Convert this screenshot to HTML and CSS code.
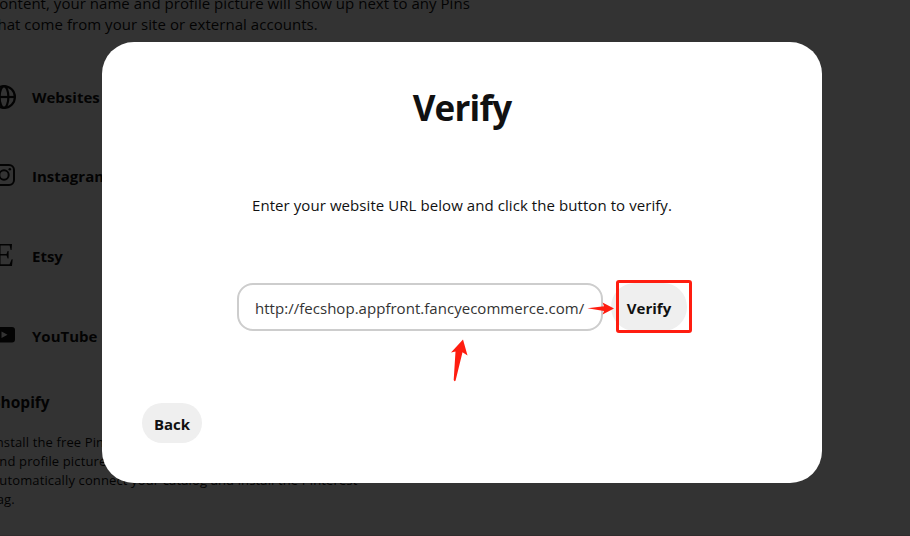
FILE: index.html
```html
<!DOCTYPE html>
<html lang="en">
<head>
<meta charset="utf-8">
<title>Verify website</title>
<link rel="stylesheet" href="styles.css">
</head>
<body>
<main class="page">
  <p class="intro">content, your name and profile picture will show up next to any Pins<br>that come from your site or external accounts.</p>
  <ul class="accounts">
    <li><svg class="icon" viewBox="0 0 24 24"><g fill="none" stroke="currentColor" stroke-width="2.2"><circle cx="12" cy="12" r="10.9"/><ellipse cx="12" cy="12" rx="4.4" ry="10.9"/><path d="M1 12h22"/></g></svg><span>Websites</span></li>
    <li><svg class="icon" viewBox="0 0 24 24"><rect x="2" y="1" width="20" height="20" rx="5" fill="none" stroke="currentColor" stroke-width="2"/><circle cx="12" cy="11" r="4.7" fill="none" stroke="currentColor" stroke-width="2"/><circle cx="17.8" cy="5.2" r="1.3" fill="currentColor"/></svg><span>Instagram</span></li>
    <li><svg class="icon" viewBox="0 0 24 24"><path fill="currentColor" d="M2 0h18l-.4 6h-1l-1-4.5H8.500v8.600h6L15.600 7h1v7.500h-1L14.500 11.500h-6v8.700h9l2.200-5h1L20 22H2v-1l3-.8V2L2 1z"/></svg><span>Etsy</span></li>
    <li><svg class="icon" viewBox="0 0 24 24"><path fill="currentColor" fill-rule="evenodd" d="M4 3h16q3 0 3 3v9.500q0 3-3 3H4q-3 0-3-3V6q0-3 3-3zM9.500 7.500v6.500l6-3.250z"/></svg><span>YouTube</span></li>
  </ul>
  <h2 class="shopify">Shopify</h2>
  <p class="details">Install the free Pinterest app to claim your website<br>and profile picture will show up on your Pins and<br>automatically connect your catalog and install the Pinterest<br>tag.</p>
</main>
<div class="overlay">
  <section class="modal">
    <h1>Verify</h1>
    <p class="hint">Enter your website URL below and click the button to verify.</p>
    <div class="form">
      <div class="field">http://fecshop.appfront.fancyecommerce.com/</div>
      <button class="button verify">Verify</button>
    </div>
    <button class="button back">Back</button>
  </section>
</div>
<div class="highlight"></div>
<svg class="arrows" viewBox="0 0 910 536"><path fill="#ff1d10" d="M587.500 308.300L604 306.300 602.500 302.600 614 308.600 602.500 314.600 604 311zM463 339.500L467.500 355.500 462.500 352.300 455.600 380.500Q454.500 382 453.700 380L455.500 351.600 451 352.500z"/></svg>
</body>
</html>
```

FILE: styles.css
```css
* { box-sizing: border-box; margin: 0; padding: 0; }
html, body { width: 910px; height: 536px; overflow: hidden; }
body { position: relative; background: #fff; color: #111; font: 400 15px/21px "Open Sans", "Noto Sans", sans-serif; }
.page { height: 536px; padding-top: 1px; margin-left: -8px; overflow: hidden; white-space: nowrap; border-bottom: 1px solid #f1dbe1; }
.intro { margin-top: -8px; height: 42px; line-height: 21px; letter-spacing: 0.04px; }
.accounts { list-style: none; margin-top: 22px; height: 320px; }
.accounts li { height: 80px; display: flex; align-items: center; font-weight: 700; }
.accounts li + li { margin-top: -1px; }
.accounts li + li + li { margin-top: 0; }
.accounts span { margin-left: 16px; }
.icon { width: 24px; height: 24px; flex: none; }
.shopify { font-size: 15.500px; line-height: 20px; margin-top: 15px; }
.details { font-size: 13px; line-height: 19px; margin-top: 21px; letter-spacing: 0.13px; }
.overlay { position: absolute; inset: 0; background: rgba(0, 0, 0, .8); padding: 42px 0 0 102px; }
.modal { width: 720px; height: 441px; border-radius: 32px; background: #fff; padding-top: 42px; }
h1 { font-size: 35px; line-height: 48px; text-align: center; letter-spacing: -0.8px; }
.hint { margin-top: 63px; line-height: 21px; text-align: center; white-space: nowrap; letter-spacing: 0.07px; }
.form { display: flex; gap: 8px; margin: 67px 0 0 135px; }
.field { width: 366px; height: 48px; border: 2px solid #cdcdcd; border-radius: 16px; padding: 0 16px; line-height: 46px; white-space: nowrap; color: #333; letter-spacing: 0.03px; }
.button { border: 0; background: #efefef; color: #111; font: 700 15px/20px "Open Sans", "Noto Sans", sans-serif; }
.verify { width: 76px; height: 48px; border-radius: 24px; padding-top: 2px; }
.back { display: block; width: 60px; height: 40px; border-radius: 20px; margin: 72px 0 0 40px; padding-top: 2px; }
.highlight { position: absolute; left: 616px; top: 280px; width: 76px; height: 53px; border: 3px solid #ff1d10; border-radius: 3px; }
.arrows { position: absolute; left: 0; top: 0; width: 910px; height: 536px; }
```
